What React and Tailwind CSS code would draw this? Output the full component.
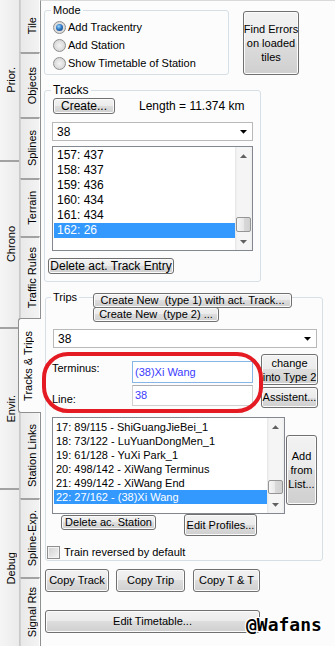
import React from "react";

const BTN =
  "flex items-center justify-center text-center border border-[#707070] rounded-[3px] bg-[linear-gradient(#f2f2f2_0%,#ebebeb_50%,#dddddd_50%,#cfcfcf_100%)] shadow-[inset_0_0_0_1px_#fbfbfb] whitespace-nowrap";

function Btn({ className = "", children }) {
  return <div className={`${BTN} ${className}`}>{children}</div>;
}

function UpArrow() {
  return (
    <svg width="7" height="4" viewBox="0 0 7 4">
      <path d="M0 4 L3.5 0.3 L7 4 Z" fill="#606060" />
    </svg>
  );
}
function DownArrow({ color = "#606060" }) {
  return (
    <svg width="7" height="4" viewBox="0 0 7 4">
      <path d="M0 0 L7 0 L3.5 3.7 Z" fill={color} />
    </svg>
  );
}

function ScrollBar({ thumbCls }) {
  return (
    <div className="w-[17px] flex flex-col items-center bg-[linear-gradient(90deg,#e6e6e6,#f5f5f5_15%,#f5f5f5_85%,#ededed)]">
      <div className="h-[17px] w-full flex items-center justify-center">
        <UpArrow />
      </div>
      <div
        className={`w-[15px] rounded-[2px] border border-[#959595] bg-[linear-gradient(90deg,#f6f6f6,#e8e8e8_50%,#d9d9d9_50%,#d1d1d1)] ${thumbCls}`}
      />
      <div className="mt-auto h-[17px] w-full flex items-center justify-center">
        <DownArrow />
      </div>
    </div>
  );
}

function ListBox({ className, items, selected, itemCls, padCls, thumbCls }) {
  return (
    <div className={`flex border border-[#828790] bg-white ${className}`}>
      <div className={`flex-1 flex flex-col ${padCls}`}>
        {items.map((t, i) => (
          <div
            key={i}
            className={`whitespace-nowrap ${itemCls} ${
              i === selected ? "bg-[#3399ff] text-white" : ""
            }`}
          >
            {t}
          </div>
        ))}
      </div>
      <ScrollBar thumbCls={thumbCls} />
    </div>
  );
}

function Combo({ className, text }) {
  return (
    <div
      className={`flex items-center bg-white border border-[#b9b9b9] text-[12px] leading-[14px] ${className}`}
    >
      <span className="pl-[4px] flex-1">{text}</span>
      <span className="w-[17px] flex items-center justify-center">
        <DownArrow color="#000000" />
      </span>
    </div>
  );
}

function Radio({ checked, label }) {
  return (
    <div className="flex items-center h-[18px]">
      <span className="w-[13px] h-[13px] rounded-full border border-[#8e8f8f] bg-[radial-gradient(circle,#f4f4f4_0%,#dedede_55%,#cbcbcb_100%)] flex items-center justify-center">
        {checked && (
          <span className="w-[7px] h-[7px] rounded-full bg-[radial-gradient(circle_at_40%_35%,#9fdcfc_0%,#2f78c5_45%,#10396b_100%)]" />
        )}
      </span>
      <span className="ml-[2px]">{label}</span>
    </div>
  );
}

function VText({ children }) {
  return (
    <span className="[writing-mode:vertical-rl] rotate-180 whitespace-nowrap text-[11px] leading-[13px]">
      {children}
    </span>
  );
}

const OUTER =
  "flex items-center justify-center pl-[3px] bg-[linear-gradient(90deg,#f5f5f5,#ebebeb)]";
const INNER =
  "flex items-center justify-center pl-[4px] bg-[linear-gradient(90deg,#e9e9e9,#f3f3f3)] border-l border-l-[#d2d2d2] border-r border-r-[#fdfdfd]";

export default function App() {
  return (
    <div className="w-[335px] h-[646px] flex overflow-hidden bg-[#fcfcfc] text-black text-[11px] leading-[13px] font-['Liberation_Sans',Arial,sans-serif]">
      {/* outer vertical tabs */}
      <div className="w-[20px] h-full flex flex-col bg-[#f0f0f0] border-r border-r-[#c9c9c9]">
        <div className={`${OUTER} h-[160px]`}>
          <VText>Prior.</VText>
        </div>
        <div className={`${OUTER} h-[167px] border-t-2 border-t-[#a2a2a2]`}>
          <VText>Chrono</VText>
        </div>
        <div className={`${OUTER} h-[161px] border-t-2 border-t-[#a2a2a2]`}>
          <VText>Envir.</VText>
        </div>
        <div className={`${OUTER} h-[158px] border-t-2 border-t-[#a2a2a2]`}>
          <VText>Debug</VText>
        </div>
      </div>

      {/* inner vertical tabs */}
      <div className="w-[20px] h-full flex flex-col bg-[#f0f0f0]">
        <div className={`${INNER} h-[52px]`}>
          <VText>Tile</VText>
        </div>
        <div className={`${INNER} h-[65px] border-t-2 border-t-[#a2a2a2]`}>
          <VText>Objects</VText>
        </div>
        <div className={`${INNER} h-[61px] border-t-2 border-t-[#a2a2a2]`}>
          <VText>Splines</VText>
        </div>
        <div className={`${INNER} h-[58px] border-t-2 border-t-[#a2a2a2]`}>
          <VText>Terrain</VText>
        </div>
        <div className={`${INNER} h-[82px] border-t-2 border-t-[#a2a2a2]`}>
          <VText>Traffic Rules</VText>
        </div>
        <div className="relative z-10 -ml-[2px] w-[23px] h-[95px] flex items-center justify-center pr-[4px] bg-[#fcfcfc] border border-r-0 border-[#8e8f8f] rounded-l-[3px]">
          <VText>Tracks &amp; Trips</VText>
        </div>
        <div className={`${INNER} h-[85px]`}>
          <VText>Station Links</VText>
        </div>
        <div className={`${INNER} h-[79px] border-t-2 border-t-[#a2a2a2]`}>
          <VText>Spline-Exp.</VText>
        </div>
        <div className={`${INNER} h-[69px] border-t-2 border-t-[#a2a2a2]`}>
          <VText>Signal Rts</VText>
        </div>
      </div>

      {/* main panel */}
      <div className="relative flex-1 flex flex-col border-l border-l-[#8e8f8f] border-t border-t-[#d9d9d9]">
        {/* Row 1: Mode + Find Errors */}
        <div className="flex items-start mt-[3px]">
          <fieldset className="ml-[3px] w-[185px] border border-[#d5dfe5] rounded-[3px] pb-[2px]">
            <legend className="ml-[6px] px-[2px] text-[11px] leading-[13px]">Mode</legend>
            <div className="flex flex-col pl-[8px] pt-[1px]">
              <Radio checked label="Add Trackentry" />
              <Radio label="Add Station" />
              <Radio label="Show Timetable of Station" />
            </div>
          </fieldset>
          <Btn className="ml-[14px] mt-[7px] w-[56px] h-[64px] flex-col leading-[14px]">
            <span>Find Errors</span>
            <span>on loaded</span>
            <span>tiles</span>
          </Btn>
        </div>

        {/* Row 2: Tracks */}
        <fieldset className="mt-[8px] ml-[3px] w-[217px] border border-[#d5dfe5] rounded-[3px] pb-[7px]">
          <legend className="ml-[6px] px-[2px] text-[12px] leading-[14px]">Tracks</legend>
          <div className="flex items-center mt-[1px] ml-[8px]">
            <Btn className="w-[62px] h-[16px] text-[12px] leading-[14px]">Create...</Btn>
            <span className="ml-[24px] text-[12px] leading-[14px]">Length = 11.374 km</span>
          </div>
          <Combo className="ml-[7px] mt-[8px] w-[201px] h-[19px]" text="38" />
          <ListBox
            className="ml-[7px] mt-[5px] w-[201px] h-[105px]"
            items={["157: 437", "158: 437", "159: 436", "160: 434", "161: 434", "162: 26"]}
            selected={5}
            padCls="pt-[1px] pl-[1px]"
            itemCls="h-[15px] leading-[15px] pl-[3px] text-[12px]"
            thumbCls="mt-[53px] h-[15px]"
          />
          <Btn className="ml-[3px] mt-[7px] w-[126px] h-[16px] text-[12px] leading-[14px]">
            Delete act. Track Entry
          </Btn>
        </fieldset>

        {/* Row 3: Trips */}
        <fieldset className="mt-[9px] ml-[4px] w-[278px] border border-[#d5dfe5] rounded-[3px] pb-[1px]">
          <legend className="ml-[5px] px-[2px] text-[11px] leading-[13px]">Trips</legend>
          <div className="flex flex-col items-start -mt-[11px] ml-[47px]">
            <Btn className="w-[199px] h-[15px]">Create New&nbsp; (type 1) with act. Track...</Btn>
            <Btn className="-mt-[1px] w-[126px] h-[15px]">Create New&nbsp; (type 2) ...</Btn>
          </div>
          <Combo className="ml-[7px] mt-[7px] w-[264px] h-[19px]" text="38" />

          <div className="flex mt-[6px]">
            <div className="ml-[6px] w-[201px] flex flex-col">
              <div className="mt-[7px] flex items-center h-[22px]">
                <span className="w-[80px] -mt-[8px]">Terminus:</span>
                <div className="w-[121px] h-[22px] bg-white border border-[#86b5e8] flex items-center pl-[2px] text-[#3b3bff]">
                  (38)Xi Wang
                </div>
              </div>
              <div className="mt-[2px] flex items-end h-[21px]">
                <span className="w-[80px]">Line:</span>
                <div className="w-[121px] h-[21px] bg-white border border-[#d0d0d0] border-t-[#abadb3] flex items-center pl-[2px] text-[#3b3bff]">
                  38
                </div>
              </div>
            </div>
            <div className="ml-[8px] flex flex-col">
              <Btn className="w-[57px] h-[31px] flex-col leading-[14px]">
                <span>change</span>
                <span>into Type 2</span>
              </Btn>
              <Btn className="mt-[2px] w-[57px] h-[21px]">Assistent...</Btn>
            </div>
          </div>

          <div className="flex items-start mt-[9px]">
            <ListBox
              className="ml-[6px] w-[233px] h-[97px]"
              items={[
                "17: 89/115 - ShiGuangJieBei_1",
                "18: 73/122 - LuYuanDongMen_1",
                "19: 61/128 - YuXi Park_1",
                "20: 498/142 - XiWang Terminus",
                "21: 499/142 - XiWang End",
                "22: 27/162 - (38)Xi Wang",
              ]}
              selected={5}
              padCls="pt-[2px] pl-[1px]"
              itemCls="h-[14px] leading-[14px] pl-[2px]"
              thumbCls="mt-[45px] h-[14px]"
            />
            <Btn className="ml-[1px] mt-[18px] w-[31px] h-[70px] flex-col leading-[14px]">
              <span>Add</span>
              <span>from</span>
              <span>List...</span>
            </Btn>
          </div>

          <div className="flex items-start">
            <Btn className="ml-[15px] mt-[1px] w-[95px] h-[15px]">Delete ac. Station</Btn>
            <Btn className="ml-[28px] w-[73px] h-[22px]">Edit Profiles...</Btn>
          </div>

          <div className="mt-[10px] ml-[1px] flex items-center h-[13px]">
            <span className="w-[13px] h-[13px] border border-[#8e8f8f] bg-[linear-gradient(135deg,#d0d0d0,#f6f6f6)] shadow-[inset_0_0_0_1px_#f4f4f4]" />
            <span className="ml-[4px]">Train reversed by default</span>
          </div>
        </fieldset>

        {/* Row 4: Copy buttons */}
        <div className="flex mt-[8px] ml-[4px]">
          <Btn className="w-[64px] h-[23px]">Copy Track</Btn>
          <Btn className="ml-[7px] w-[69px] h-[23px]">Copy Trip</Btn>
          <Btn className="ml-[8px] w-[67px] h-[23px]">Copy T &amp; T</Btn>
        </div>

        {/* Row 5 */}
        <Btn className="mt-[18px] ml-[4px] w-[215px] h-[23px]">Edit Timetable...</Btn>

        {/* red annotation */}
        <div className="absolute left-[1px] top-[351px] w-[221px] h-[61px] border-[4px] border-[#e41b23] rounded-[26px] pointer-events-none" />

        {/* watermark */}
        <div className="absolute left-[205px] top-[615px] font-['DejaVu_Sans_Mono',monospace] font-bold text-[18px] leading-[18px] text-black [text-shadow:1px_0_#fff,-1px_0_#fff,0_1px_#fff,0_-1px_#fff,1px_1px_#fff,-1px_-1px_#fff,1px_-1px_#fff,-1px_1px_#fff]">
          @Wafans
        </div>
      </div>
    </div>
  );
}
